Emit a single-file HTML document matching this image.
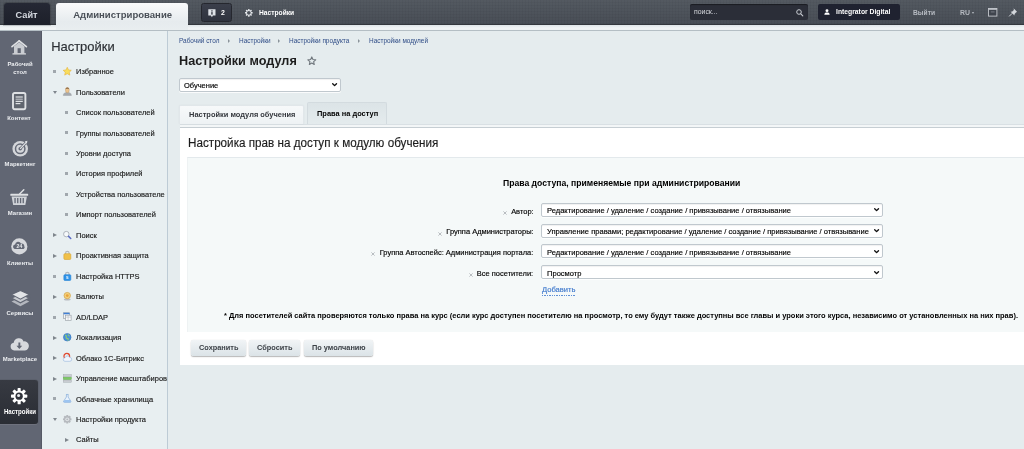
<!DOCTYPE html>
<html lang="ru">
<head>
<meta charset="utf-8">
<title>Настройки модуля</title>
<style>
*{box-sizing:border-box;margin:0;padding:0}
html,body{width:1024px;height:449px;overflow:hidden}
body{font-family:"Liberation Sans",sans-serif;background:#e5ecee;position:relative;color:#000}
#wrap{position:absolute;left:0;top:0;width:1024px;height:449px;overflow:hidden;filter:blur(.3px);will-change:transform}
.t{position:absolute;white-space:nowrap;line-height:10px}
.b{position:absolute}
#top{left:0;top:0;width:1024px;height:25px;background:#4e545c;
 background-image:linear-gradient(rgba(255,255,255,.03),rgba(0,0,0,.07)),repeating-linear-gradient(90deg,rgba(0,0,0,.035) 0 1px,transparent 1px 3px),repeating-linear-gradient(0deg,rgba(0,0,0,.035) 0 1px,transparent 1px 3px);
 border-bottom:1px solid #34373d}
#strip{left:0;top:25px;width:1024px;height:5.5px;background:linear-gradient(#dfe5e8,#f1f4f5 60%,#eef2f3);border-bottom:1px solid #b4bec4}
#tab-site{left:4px;top:3px;width:46px;height:22px;background:linear-gradient(#252834,#1d202a);border-radius:3px 3px 0 0;box-shadow:0 0 0 1px rgba(0,0,0,.15)}
#tab-admin{left:56px;top:3px;width:132px;height:27px;background:linear-gradient(#f9fafb,#e6ebee 70%,#e9eef0);border-radius:3px 3px 0 0}
#notif{left:201px;top:3px;width:30.5px;height:19px;background:linear-gradient(#3b3f4b,#2f333e);border:1px solid #25272e;border-radius:2.5px}
#search{left:690px;top:4px;width:118px;height:16px;background:#2b2e38;border-radius:2px;box-shadow:inset 0 1px 1px rgba(0,0,0,.4)}
#user{left:818px;top:4px;width:81.5px;height:16px;background:#1f2230;border-radius:2px}
#side{left:0;top:30.5px;width:42px;height:418.5px;background:#616673;box-shadow:inset -1px 0 0 rgba(0,0,0,.12)}
#side-act{left:0;top:380px;width:38px;height:43.5px;background:linear-gradient(#373a42,#2a2d34);border-radius:0 3px 3px 0;box-shadow:0 0 1px rgba(0,0,0,.6),0 1px 0 rgba(255,255,255,.13)}
#menu{left:42px;top:30.5px;width:126px;height:418.5px;background:#e8eff1;border-right:1px solid #bdcbd5}
.sq{position:absolute;width:3px;height:3px;background:#a0a7ad}
.ar{position:absolute;width:0;height:0}
.ar.r{border-left:4px solid #7f868d;border-top:2.5px solid transparent;border-bottom:2.5px solid transparent}
.ar.d{border-top:3.6px solid #7f868d;border-left:2.4px solid transparent;border-right:2.4px solid transparent}
#panel{left:179.5px;top:126.6px;width:850px;height:238.4px;background:#fff;border-top:1px solid #c6ced3}
#panel-line{left:179.5px;top:123.8px;width:850px;height:3.6px;background:#f3f6f7;border-top:.6px solid #d9e0e4}
#inner{left:186.5px;top:157px;width:850px;height:174.5px;background:#f5f9f9;border-top:1px solid #e3e9ec;border-left:1px solid #eef2f3}
#tab1{left:179.4px;top:104.8px;width:124.9px;height:19px;background:linear-gradient(#f7f9fa,#eef2f4);border:1px solid #e1e7ea;border-bottom:none;border-radius:2px 2px 0 0;box-shadow:0 0 1px rgba(0,0,0,.12)}
#tab2{left:307.2px;top:102.2px;width:79.6px;height:22.3px;background:linear-gradient(#dce4e7,#e4ebed);border:1px solid #d3dbdf;border-bottom:none;border-radius:2px 2px 0 0}
.sel{position:absolute;left:541px;width:341.6px;height:14px;background:#fff;border:1px solid #c0c8ce;border-radius:2px;box-shadow:0 1px 0 rgba(255,255,255,.8), inset 0 1px 1px rgba(0,0,0,.06)}
.btn{position:absolute;top:339.5px;height:16.2px;background:linear-gradient(#f1f4f6,#dbe3e7);border-radius:2.5px;box-shadow:0 1px 1.2px rgba(0,0,0,.28), 0 0 .8px rgba(0,0,0,.25)}
svg{position:absolute;overflow:visible}
</style>
</head>
<body>
<div id="wrap">
<div class="b" id="top"></div>
<div class="b" id="strip"></div>
<div class="b" id="tab-site"></div>
<div class="b" id="tab-admin"></div>
<div class="b" id="notif"></div>
<div class="t " style="left:15.60px;transform-origin:0 50%;top:9.91px;font-size:9.200px;transform:scaleX(1.0000);color:#d5d9e0;font-weight:bold;">Сайт</div>
<div class="t " style="left:73.20px;transform-origin:0 50%;top:9.99px;font-size:9.550px;transform:scaleX(1.0000);color:#4a5058;font-weight:bold;">Администрирование</div>
<svg style="left:207.5px;top:8.5px" width="8" height="9" viewBox="0 0 8 9"><path d="M0.3 0.3h7.2v6.2h-2.6l-1 1.8l-1-1.8h-2.6z" fill="#dfe3e8"/><rect x="3.3" y="1.3" width="1.3" height="1.2" fill="#2e313c"/><rect x="3.3" y="3.1" width="1.3" height="2.5" fill="#2e313c"/></svg>
<div class="t " style="left:221.00px;transform-origin:0 50%;top:7.89px;font-size:7.245px;transform:scaleX(0.9524);color:#ffffff;font-weight:bold;">2</div>
<svg style="left:245.2px;top:8.7px" width="7.7" height="7.7" viewBox="-10 -10 20 20"><g fill="#e9ecef"><rect x="-1.9" y="-10" width="3.8" height="20" rx="0.8" transform="rotate(0)"/><rect x="-1.9" y="-10" width="3.8" height="20" rx="0.8" transform="rotate(45)"/><rect x="-1.9" y="-10" width="3.8" height="20" rx="0.8" transform="rotate(90)"/><rect x="-1.9" y="-10" width="3.8" height="20" rx="0.8" transform="rotate(135)"/><circle r="6.9"/></g><circle r="4.9" fill="#4e545c"/></svg>
<div class="t " style="left:258.80px;transform-origin:0 50%;top:7.97px;font-size:7.003px;transform:scaleX(0.9524);color:#ffffff;font-weight:bold;">Настройки</div>
<div class="b" id="search"></div>
<div class="t " style="left:693.80px;transform-origin:0 50%;top:6.79px;font-size:7.245px;transform:scaleX(0.9524);color:#d6d9de;">поиск...</div>
<svg style="left:796px;top:9px" width="8" height="8" viewBox="0 0 8 8"><circle cx="3" cy="3" r="2.3" fill="none" stroke="#c9cdd3" stroke-width="1"/><path d="M4.8 4.8L6.800 6.800" stroke="#c9cdd3" stroke-width="1.1" stroke-linecap="round"/></svg>
<div class="b" id="user"></div>
<svg style="left:824.2px;top:8.8px" width="6" height="6" viewBox="0 0 7 7"><circle cx="3.5" cy="1.9" r="1.7" fill="#fff"/><path d="M0.4 6.6c0-2 1.2-2.6 3.1-2.6s3.1.6 3.1 2.6z" fill="#fff"/></svg>
<div class="t " style="left:835.50px;transform-origin:0 50%;top:7.13px;font-size:7.140px;transform:scaleX(0.9524);color:#ffffff;font-weight:bold;">Integrator Digital</div>
<div class="t " style="left:912.90px;transform-origin:0 50%;top:7.76px;font-size:7.035px;transform:scaleX(0.9524);color:#b7bbc2;font-weight:bold;">Выйти</div>
<div class="t " style="left:960.00px;transform-origin:0 50%;top:7.69px;font-size:7.245px;transform:scaleX(0.9524);color:#b7bbc2;font-weight:bold;">RU</div>
<div class="ar" style="left:972.3px;top:11.8px;border-top:2px solid #b9bdc4;border-left:1.7px solid transparent;border-right:1.7px solid transparent"></div>
<svg style="left:988px;top:8px" width="9.4" height="8.6" viewBox="0 0 9.4 8.6"><rect x="0.5" y="0.5" width="8.4" height="7.6" fill="#3f444d" stroke="#c4c7cd" stroke-width=".9"/><rect x="0.5" y="0.5" width="8.4" height="1.3" fill="#c4c7cd"/><rect x="2.8" y="3.6" width="3.8" height="0.7" fill="#8f949c"/></svg>
<svg style="left:1009px;top:8.3px" width="8.5" height="8.5" viewBox="0 0 8.5 8.5"><path d="M4.6 0.3l3.6 3.6l-1 .4l-1.6 1.6l-.1 1.7l-3.9-3.9l1.7-.1l1.6-1.6z" fill="#d4d7dc"/><path d="M3 5.5L0.4 8.1" stroke="#d4d7dc" stroke-width="1" stroke-linecap="round"/></svg>
<div class="b" id="side"></div>
<div class="b" id="side-act"></div>
<div class="t" style="left:-10.399999999999999px;width:60px;text-align:center;top:58.94px;font-size:6.248px;transform:scaleX(0.9524);color:#eceef1;font-weight:bold">Рабочий</div>
<div class="t" style="left:-10.399999999999999px;width:60px;text-align:center;top:66.84px;font-size:6.248px;transform:scaleX(0.9524);color:#eceef1;font-weight:bold">стол</div>
<div class="t" style="left:-10.600000000000001px;width:60px;text-align:center;top:112.84px;font-size:6.248px;transform:scaleX(0.9524);color:#eceef1;font-weight:bold">Контент</div>
<div class="t" style="left:-10.3px;width:60px;text-align:center;top:159.14px;font-size:6.248px;transform:scaleX(0.9524);color:#eceef1;font-weight:bold">Маркетинг</div>
<div class="t" style="left:-10.399999999999999px;width:60px;text-align:center;top:208.44px;font-size:6.248px;transform:scaleX(0.9524);color:#eceef1;font-weight:bold">Магазин</div>
<div class="t" style="left:-10.399999999999999px;width:60px;text-align:center;top:258.04px;font-size:6.248px;transform:scaleX(0.9524);color:#eceef1;font-weight:bold">Клиенты</div>
<div class="t" style="left:-10.3px;width:60px;text-align:center;top:308.34px;font-size:6.248px;transform:scaleX(0.9524);color:#eceef1;font-weight:bold">Сервисы</div>
<div class="t" style="left:-10.2px;width:60px;text-align:center;top:354.14px;font-size:6.248px;transform:scaleX(0.9524);color:#eceef1;font-weight:bold">Marketplace</div>
<div class="t" style="left:-10.100000000000001px;width:60px;text-align:center;top:407.08px;font-size:6.405px;transform:scaleX(0.9524);color:#ffffff;font-weight:bold">Настройки</div>
<svg style="left:11px;top:39.5px" width="16.4" height="14.8" viewBox="0 0 16.4 14.8"><path d="M8.2 0.9L1 6.6" stroke="#dfe1e4" stroke-width="1.7" stroke-linecap="round" fill="none"/><path d="M8.2 0.9L15.4 6.6" stroke="#dfe1e4" stroke-width="1.7" stroke-linecap="round" fill="none"/><path d="M3 6.3L8.2 2.3L13.4 6.3V13.4H3z" fill="#c9ccd1"/><rect x="6.6" y="8.2" width="3.2" height="5.2" fill="#616673"/><rect x="1.4" y="13.3" width="13.6" height="1.3" rx=".5" fill="#dfe1e4"/></svg>
<svg style="left:12.1px;top:91.5px" width="14.4" height="18.2" viewBox="0 0 14.4 18.2"><rect x="1" y="1" width="12.4" height="16.2" rx="1.6" fill="#60656f" stroke="#dfe1e4" stroke-width="1.9"/><rect x="3.6" y="4.4" width="7.2" height="1.2" fill="#dfe1e4"/><rect x="3.6" y="6.6" width="7.2" height="1.2" fill="#b9bcc2"/><rect x="3.6" y="8.8" width="7.2" height="1.2" fill="#dfe1e4"/><rect x="3.6" y="11" width="4.8" height="1.2" fill="#dfe1e4"/></svg>
<svg style="left:11.5px;top:138.5px" width="17" height="18" viewBox="0 0 17 18"><circle cx="8.2" cy="9.8" r="7.8" fill="#d4d6da"/><circle cx="8.2" cy="9.8" r="4.7" fill="none" stroke="#666b78" stroke-width="1.5"/><circle cx="8.2" cy="9.8" r="1.8" fill="#666b78"/><path d="M8.6 9.4L14 3.6" stroke="#616673" stroke-width="2.6"/><path d="M8.6 9.400L14 3.600" stroke="#dfe1e4" stroke-width="1.300" stroke-linecap="round"/><path d="M12.6 2.400l2.800-.6l-.5 2.900z" fill="#dfe1e4"/></svg>
<svg style="left:10px;top:188.7px" width="18.5" height="16.4" viewBox="0 0 18.5 16.4"><path d="M9.6 5L13.8 0.8" stroke="#dfe1e4" stroke-width="1.5" stroke-linecap="round"/><rect x="0.3" y="4.8" width="17.9" height="2" rx=".6" fill="#dfe1e4"/><path d="M1.6 7.6h15.3l-1.6 8.3h-12.1z" fill="#d0d3d8"/><g fill="#616673"><rect x="4.4" y="9" width="1.3" height="5.2"/><rect x="7.1" y="9" width="1.3" height="5.2"/><rect x="9.9" y="9" width="1.3" height="5.2"/><rect x="12.6" y="9" width="1.3" height="5.2"/></g></svg>
<svg style="left:11px;top:237.7px" width="16.6" height="16.8" viewBox="0 0 16.6 16.8"><circle cx="8.3" cy="8.4" r="8.1" fill="#d6d8dc"/><path d="M3.6 10.9a2.2 2.2 0 0 1 .5-4.3a3.1 3.1 0 0 1 5.9-1.1a2.9 2.9 0 0 1 3.3 2.7a1.9 1.9 0 0 1-.6 2.7z" fill="#636875"/><text x="8.4" y="10.3" font-family="Liberation Sans" font-weight="bold" font-size="5.2" fill="#e7e9ec" text-anchor="middle">24</text></svg>
<svg style="left:10.6px;top:289.6px" width="18.8" height="16.6" viewBox="0 0 18.8 16.6"><path d="M9.4 7.4L18.3 11.4L9.4 16.2L0.5 11.4z" fill="#b4b7be"/><path d="M9.4 4.2L18.3 8L9.4 12.800L0.500 8z" fill="#c8cbd0" stroke="#616673" stroke-width="1.100"/><path d="M9.400 0.400L18.300 4.400L9.400 9.200L0.500 4.400z" fill="#e2e4e7" stroke="#616673" stroke-width="1.100"/></svg>
<svg style="left:10px;top:338.4px" width="18.6" height="12.8" viewBox="0 0 18.6 12.8"><path d="M4.2 12.5a3.9 3.9 0 0 1-.5-7.7a5.2 5.2 0 0 1 9.9-1.4a4.6 4.6 0 0 1 1.4 9.1z" fill="#d7d9dd"/><path d="M8.4 4.6h1.9v3.2h1.9l-2.85 3.1l-2.85-3.1h1.9z" fill="#616673"/></svg>
<svg style="left:10.6px;top:387.5px" width="16.3" height="16.3" viewBox="-10 -10 20 20"><g fill="#ffffff"><rect x="-1.9" y="-10" width="3.8" height="20" rx="0.8" transform="rotate(0)"/><rect x="-1.9" y="-10" width="3.8" height="20" rx="0.8" transform="rotate(45)"/><rect x="-1.9" y="-10" width="3.8" height="20" rx="0.8" transform="rotate(90)"/><rect x="-1.9" y="-10" width="3.8" height="20" rx="0.8" transform="rotate(135)"/><circle r="6.9"/></g><circle r="4.5" fill="#30333b"/></svg>
<svg style="left:17.15px;top:394.05px" width="3.2" height="3.2" viewBox="0 0 4 4"><circle cx="2" cy="2" r="1.9" fill="#e9ebee"/></svg>
<div class="b" id="menu"></div>
<div class="t " style="left:51.20px;transform-origin:0 50%;top:42.31px;font-size:12.950px;transform:scaleX(1.0000);color:#2c3035;-webkit-text-stroke:.16px;">Настройки</div>
<div class="t " style="left:76.00px;transform-origin:0 50%;top:67.17px;font-size:7.875px;transform:scaleX(0.9524);color:#1a1a1a;-webkit-text-stroke:.16px;">Избранное</div>
<div class="sq" style="left:53.0px;top:70.10px"></div>
<svg style="left:62.5px;top:66.90px" width="8.7" height="8.7" viewBox="0 0 9.2 9.2"><path d="M4.5 0.3l1.3 2.8l3 .4l-2.2 2.1l.6 3l-2.7-1.5l-2.7 1.5l.6-3l-2.2-2.1l3-.4z" fill="#f9de5c" stroke="#e4b031" stroke-width=".6"/></svg>
<div class="t " style="left:76.00px;transform-origin:0 50%;top:87.63px;font-size:7.875px;transform:scaleX(0.9524);color:#1a1a1a;-webkit-text-stroke:.16px;">Пользователи</div>
<div class="ar d" style="left:52.9px;top:91.06px"></div>
<svg style="left:62.5px;top:87.36px" width="8.7" height="8.7" viewBox="0 0 9.2 9.2"><path d="M0.300 9c0-2.400 1.500-3.300 4.300-3.300s4.300.9 4.300 3.300z" fill="#a6aaaf" stroke="#8f9499" stroke-width=".4"/><rect x="2.700" y="0.600" width="3.800" height="5.400" rx="1.800" fill="#ecc48e" stroke="#b08a5c" stroke-width=".4"/><path d="M2.700 2.400a1.900 1.900 0 0 1 3.800 0c-.9-.7-2.900-.7-3.800 0z" fill="#84633f"/></svg>
<div class="t " style="left:76.00px;transform-origin:0 50%;top:108.10px;font-size:7.875px;transform:scaleX(0.9524);color:#1a1a1a;-webkit-text-stroke:.16px;">Список пользователей</div>
<div class="sq" style="left:65.0px;top:111.02px"></div>
<div class="t " style="left:76.00px;transform-origin:0 50%;top:128.56px;font-size:7.875px;transform:scaleX(0.9524);color:#1a1a1a;-webkit-text-stroke:.16px;">Группы пользователей</div>
<div class="sq" style="left:65.0px;top:131.49px"></div>
<div class="t " style="left:76.00px;transform-origin:0 50%;top:149.02px;font-size:7.875px;transform:scaleX(0.9524);color:#1a1a1a;-webkit-text-stroke:.16px;">Уровни доступа</div>
<div class="sq" style="left:65.0px;top:151.95px"></div>
<div class="t " style="left:76.00px;transform-origin:0 50%;top:169.48px;font-size:7.875px;transform:scaleX(0.9524);color:#1a1a1a;-webkit-text-stroke:.16px;">История профилей</div>
<div class="sq" style="left:65.0px;top:172.41px"></div>
<div class="t " style="left:76.00px;transform-origin:0 50%;top:189.94px;font-size:7.875px;transform:scaleX(0.9524);color:#1a1a1a;-webkit-text-stroke:.16px;">Устройства пользователе</div>
<div class="sq" style="left:65.0px;top:192.87px"></div>
<div class="t " style="left:76.00px;transform-origin:0 50%;top:210.41px;font-size:7.875px;transform:scaleX(0.9524);color:#1a1a1a;-webkit-text-stroke:.16px;">Импорт пользователей</div>
<div class="sq" style="left:65.0px;top:213.33px"></div>
<div class="t " style="left:76.00px;transform-origin:0 50%;top:230.87px;font-size:7.875px;transform:scaleX(0.9524);color:#1a1a1a;-webkit-text-stroke:.16px;">Поиск</div>
<div class="ar r" style="left:53.0px;top:233.40px"></div>
<svg style="left:62.5px;top:230.60px" width="8.7" height="8.7" viewBox="0 0 9.2 9.2"><circle cx="3.5" cy="3.3" r="2.9" fill="#f6f9fb" stroke="#a3aab2" stroke-width=".9"/><path d="M5.9 5.700L8.200 8" stroke="#5b6cc4" stroke-width="1.600" stroke-linecap="round"/></svg>
<div class="t " style="left:76.00px;transform-origin:0 50%;top:251.33px;font-size:7.875px;transform:scaleX(0.9524);color:#1a1a1a;-webkit-text-stroke:.16px;">Проактивная защита</div>
<div class="ar r" style="left:53.0px;top:253.86px"></div>
<svg style="left:62.5px;top:251.06px" width="8.7" height="8.7" viewBox="0 0 9.2 9.2"><path d="M2.700 3.600V2.300a1.900 1.900 0 0 1 3.800 0V3.600" fill="none" stroke="#b4b8bd" stroke-width="1.200"/><rect x="0.900" y="2.800" width="7.400" height="6.200" rx="1.100" fill="#f0c04a" stroke="#d6a12a" stroke-width=".6"/></svg>
<div class="t " style="left:76.00px;transform-origin:0 50%;top:271.79px;font-size:7.875px;transform:scaleX(0.9524);color:#1a1a1a;-webkit-text-stroke:.16px;">Настройка HTTPS</div>
<div class="sq" style="left:53.0px;top:274.72px"></div>
<svg style="left:62.5px;top:271.52px" width="8.7" height="8.7" viewBox="0 0 9.2 9.2"><path d="M2.700 3.600V2.300a1.900 1.900 0 0 1 3.800 0V3.600" fill="none" stroke="#b4b8bd" stroke-width="1.200"/><rect x="0.900" y="2.800" width="7.400" height="6.200" rx="1.100" fill="#2f93e8" stroke="#1f7fd3" stroke-width=".6"/><text x="4.600" y="7.700" font-size="5" font-weight="bold" fill="#ffffff" text-anchor="middle" font-family="Liberation Sans">s</text></svg>
<div class="t " style="left:76.00px;transform-origin:0 50%;top:292.25px;font-size:7.875px;transform:scaleX(0.9524);color:#1a1a1a;-webkit-text-stroke:.16px;">Валюты</div>
<div class="ar r" style="left:53.0px;top:294.78px"></div>
<svg style="left:62.5px;top:291.98px" width="8.7" height="8.7" viewBox="0 0 9.2 9.2"><ellipse cx="4.5" cy="8" rx="3.6" ry="1.1" fill="#b8bcc2"/><circle cx="4.5" cy="3.8" r="3.4" fill="#f3cf7c" stroke="#cf9f42" stroke-width=".7"/><circle cx="4.5" cy="3.8" r="1.5" fill="#e8a33b"/></svg>
<div class="t " style="left:76.00px;transform-origin:0 50%;top:312.72px;font-size:7.875px;transform:scaleX(0.9524);color:#1a1a1a;-webkit-text-stroke:.16px;">AD/LDAP</div>
<div class="sq" style="left:53.0px;top:315.64px"></div>
<svg style="left:62.5px;top:312.44px" width="8.7" height="8.7" viewBox="0 0 9.2 9.2"><rect x="0.6" y="0.8" width="6.4" height="6" fill="#f2f4f6" stroke="#9aa1a8" stroke-width=".7"/><rect x="0.6" y="0.8" width="6.4" height="1.6" fill="#3f7fd6"/><rect x="2.6" y="3.4" width="6" height="5.4" fill="#fbfbfc" stroke="#9aa1a8" stroke-width=".7"/><path d="M2.6 5.4h6M5.4 3.4v5.4" stroke="#b3b9bf" stroke-width=".6"/></svg>
<div class="t " style="left:76.00px;transform-origin:0 50%;top:333.18px;font-size:7.875px;transform:scaleX(0.9524);color:#1a1a1a;-webkit-text-stroke:.16px;">Локализация</div>
<div class="ar r" style="left:53.0px;top:335.71px"></div>
<svg style="left:62.5px;top:332.91px" width="8.7" height="8.7" viewBox="0 0 9.2 9.2"><circle cx="4.5" cy="4.5" r="4" fill="#4a90d9" stroke="#2f6fb8" stroke-width=".6"/><path d="M2.2 2.2c1 .2 1.6 1 1.2 2s.4 1.600 1.400 1.600s.8 1.400.2 2.200M6 1.600c-.4.800.2 1.400 1 1.400" stroke="#8fd16a" stroke-width="1.200" fill="none"/></svg>
<div class="t " style="left:76.00px;transform-origin:0 50%;top:353.64px;font-size:7.875px;transform:scaleX(0.9524);color:#1a1a1a;-webkit-text-stroke:.16px;">Облако 1С-Битрикс</div>
<div class="ar r" style="left:53.0px;top:356.17px"></div>
<svg style="left:62.5px;top:353.37px" width="8.7" height="8.7" viewBox="0 0 9.2 9.2"><circle cx="4" cy="3.4" r="3" fill="none" stroke="#e0492f" stroke-width="1.3"/><path d="M2.200 8.800a1.900 1.900 0 0 1 0-3.800a2.600 2.600 0 0 1 4.800-.4a2.100 2.100 0 0 1 .2 4.200z" fill="#f1f5fb" stroke="#8fb1dd" stroke-width=".6"/></svg>
<div class="t " style="left:76.00px;transform-origin:0 50%;top:374.10px;font-size:7.875px;transform:scaleX(0.9524);color:#1a1a1a;-webkit-text-stroke:.16px;">Управление масштабиров</div>
<div class="ar r" style="left:53.0px;top:376.63px"></div>
<svg style="left:62.5px;top:373.83px" width="8.7" height="8.7" viewBox="0 0 9.2 9.2"><rect x="0.3" y="0.6" width="8.6" height="2.400" fill="#c9cdd2" stroke="#9aa0a6" stroke-width=".4"/><rect x="0.3" y="3.4" width="8.6" height="2.600" fill="#7dc966" stroke="#5aa746" stroke-width=".4"/><rect x="0.3" y="6.400" width="8.6" height="2.400" fill="#c9cdd2" stroke="#9aa0a6" stroke-width=".4"/></svg>
<div class="t " style="left:76.00px;transform-origin:0 50%;top:394.56px;font-size:7.875px;transform:scaleX(0.9524);color:#1a1a1a;-webkit-text-stroke:.16px;">Облачные хранилища</div>
<div class="sq" style="left:53.0px;top:397.49px"></div>
<svg style="left:62.5px;top:394.29px" width="8.7" height="8.7" viewBox="0 0 9.2 9.2"><path d="M3.2 0.5h2.600M3.600 0.600v2.600l-2.800 4.200a1 1 0 0 0 .8 1.500h5.800a1 1 0 0 0 .8-1.500l-2.800-4.200v-2.600" fill="#e8f2fc" stroke="#7fa8d8" stroke-width=".7"/><path d="M1.600 6.400h5.800l.9 1.500a.6.6 0 0 1-.5.900h-6.600a.6.6 0 0 1-.5-.9z" fill="#9cc4f0"/></svg>
<div class="t " style="left:76.00px;transform-origin:0 50%;top:415.03px;font-size:7.875px;transform:scaleX(0.9524);color:#1a1a1a;-webkit-text-stroke:.16px;">Настройки продукта</div>
<div class="ar d" style="left:52.9px;top:418.45px"></div>
<svg style="left:62.5px;top:414.75px" width="8.7" height="8.7" viewBox="0 0 9.2 9.2"><g transform="translate(4.5 4.600) scale(.45)" fill="#b5b9be"><rect x="-2.4" y="-10" width="4.8" height="20" rx=".8" transform="rotate(0)"/><rect x="-2.4" y="-10" width="4.8" height="20" rx=".8" transform="rotate(45)"/><rect x="-2.4" y="-10" width="4.8" height="20" rx=".8" transform="rotate(90)"/><rect x="-2.4" y="-10" width="4.8" height="20" rx=".8" transform="rotate(135)"/><circle r="7.600"/><circle r="4.600" fill="#dfe3e6"/><circle r="2.200" fill="#b5b9be"/></g></svg>
<div class="t " style="left:76.00px;transform-origin:0 50%;top:435.49px;font-size:7.875px;transform:scaleX(0.9524);color:#1a1a1a;-webkit-text-stroke:.16px;">Сайты</div>
<div class="ar r" style="left:65.4px;top:438.02px"></div>
<div class="b" style="left:167px;top:30.5px;width:1px;height:418.5px;background:#bdcbd5"></div>
<div class="b" style="left:168px;top:30.5px;width:11px;height:418.5px;background:#e5ecee"></div>
<div class="t " style="left:179.25px;transform-origin:0 50%;top:35.95px;font-size:6.773px;transform:scaleX(0.9524);color:#2f4c86;">Рабочий стол</div>
<div class="t " style="left:238.75px;transform-origin:0 50%;top:35.95px;font-size:6.773px;transform:scaleX(0.9524);color:#2f4c86;">Настройки</div>
<div class="t " style="left:289.25px;transform-origin:0 50%;top:35.95px;font-size:6.773px;transform:scaleX(0.9524);color:#2f4c86;">Настройки продукта</div>
<div class="t " style="left:369.25px;transform-origin:0 50%;top:35.95px;font-size:6.773px;transform:scaleX(0.9524);color:#2f4c86;">Настройки модулей</div>
<div class="ar" style="left:228.3px;top:38.7px;border-left:2.7px solid #8b939a;border-top:2px solid transparent;border-bottom:2px solid transparent"></div>
<div class="ar" style="left:278.3px;top:38.7px;border-left:2.7px solid #8b939a;border-top:2px solid transparent;border-bottom:2px solid transparent"></div>
<div class="ar" style="left:358.3px;top:38.7px;border-left:2.7px solid #8b939a;border-top:2px solid transparent;border-bottom:2px solid transparent"></div>
<div class="t " style="left:178.90px;transform-origin:0 50%;top:56.41px;font-size:12.954px;transform:scaleX(0.9804);color:#1d1d1d;font-weight:bold;">Настройки модуля</div>
<svg style="left:307.3px;top:56.4px" width="9.6" height="9.4" viewBox="0 0 9.6 9.4"><path d="M4.8 0.9l1.15 2.6l2.8.3l-2.1 1.900l.6 2.800l-2.450-1.450l-2.450 1.450l.6-2.800l-2.100-1.900l2.800-.3z" fill="none" stroke="#70777d" stroke-width="1.1" stroke-linejoin="round"/></svg>
<div class="sel" style="left:179.3px;top:77.5px;width:161.3px;height:14.3px"></div>
<div class="t " style="left:184.30px;transform-origin:0 50%;top:80.72px;font-size:7.875px;transform:scaleX(0.9524);color:#000;-webkit-text-stroke:.16px;">Обучение</div>
<svg style="left:332.1px;top:83.2px" width="5.2" height="3.5" viewBox="0 0 6 4"><path d="M0.8 0.800L3 3L5.200 0.800" fill="none" stroke="#111" stroke-width="1.600" stroke-linecap="round" stroke-linejoin="round"/></svg>
<div class="b" id="panel-line"></div>
<div class="b" id="panel"></div>
<div class="b" id="tab1"></div>
<div class="b" id="tab2"></div>
<div class="t " style="left:188.50px;transform-origin:0 50%;top:109.59px;font-size:7.833px;transform:scaleX(0.9524);color:#33373c;font-weight:bold;">Настройки модуля обучения</div>
<div class="t " style="left:316.80px;transform-origin:0 50%;top:109.09px;font-size:7.823px;transform:scaleX(0.9524);color:#000;font-weight:bold;">Права на доступ</div>
<div class="t " style="left:188.40px;transform-origin:0 50%;top:137.96px;font-size:12.519px;transform:scaleX(0.9346);color:#1c1c1c;-webkit-text-stroke:.16px;">Настройка прав на доступ к модулю обучения</div>
<div class="b" id="inner"></div>
<div class="t " style="left:503.00px;transform-origin:0 50%;top:178.16px;font-size:9.051px;transform:scaleX(0.9524);color:#000;font-weight:bold;">Права доступа, применяемые при администрировании</div>
<div class="t " style="right:490.70px;transform-origin:100% 50%;top:206.52px;font-size:7.875px;transform:scaleX(0.9524);color:#000;-webkit-text-stroke:.16px;">Автор:</div>
<svg style="left:503px;top:210.75px" width="4" height="4" viewBox="0 0 4 4"><path d="M0.4 0.400L3.600 3.600M3.600 0.400L0.400 3.600" stroke="#a9afb4" stroke-width=".8"/></svg>
<div class="sel" style="top:203.00px"></div>
<div class="t " style="left:547.00px;transform-origin:0 50%;top:206.05px;font-size:7.949px;transform:scaleX(0.9524);color:#000;-webkit-text-stroke:.16px;">Редактирование / удаление / создание / привязывание / отвязывание</div>
<svg style="left:874.0px;top:208.3px" width="5.2" height="3.5" viewBox="0 0 6 4"><path d="M0.8 0.800L3 3L5.200 0.800" fill="none" stroke="#111" stroke-width="1.600" stroke-linecap="round" stroke-linejoin="round"/></svg>
<div class="t " style="right:490.70px;transform-origin:100% 50%;top:227.35px;font-size:7.875px;transform:scaleX(0.9524);color:#000;-webkit-text-stroke:.16px;">Группа Администраторы:</div>
<svg style="left:438px;top:231.58px" width="4" height="4" viewBox="0 0 4 4"><path d="M0.4 0.400L3.600 3.600M3.600 0.400L0.400 3.600" stroke="#a9afb4" stroke-width=".8"/></svg>
<div class="sel" style="top:223.63px"></div>
<div class="t " style="left:547.00px;transform-origin:0 50%;top:226.88px;font-size:7.949px;transform:scaleX(0.9524);color:#000;-webkit-text-stroke:.16px;">Управление правами; редактирование / удаление / создание / привязывание / отвязывание</div>
<svg style="left:874.0px;top:228.93px" width="5.2" height="3.5" viewBox="0 0 6 4"><path d="M0.8 0.800L3 3L5.200 0.800" fill="none" stroke="#111" stroke-width="1.600" stroke-linecap="round" stroke-linejoin="round"/></svg>
<div class="t " style="right:490.70px;transform-origin:100% 50%;top:248.18px;font-size:7.875px;transform:scaleX(0.9524);color:#000;-webkit-text-stroke:.16px;">Группа Автоспейс: Администрация портала:</div>
<svg style="left:371.3px;top:252.41px" width="4" height="4" viewBox="0 0 4 4"><path d="M0.4 0.400L3.600 3.600M3.600 0.400L0.400 3.600" stroke="#a9afb4" stroke-width=".8"/></svg>
<div class="sel" style="top:244.46px"></div>
<div class="t " style="left:547.00px;transform-origin:0 50%;top:247.71px;font-size:7.949px;transform:scaleX(0.9524);color:#000;-webkit-text-stroke:.16px;">Редактирование / удаление / создание / привязывание / отвязывание</div>
<svg style="left:874.0px;top:249.76000000000002px" width="5.2" height="3.5" viewBox="0 0 6 4"><path d="M0.8 0.800L3 3L5.200 0.800" fill="none" stroke="#111" stroke-width="1.600" stroke-linecap="round" stroke-linejoin="round"/></svg>
<div class="t " style="right:490.70px;transform-origin:100% 50%;top:269.01px;font-size:7.875px;transform:scaleX(0.9524);color:#000;-webkit-text-stroke:.16px;">Все посетители:</div>
<svg style="left:469.3px;top:273.24px" width="4" height="4" viewBox="0 0 4 4"><path d="M0.4 0.400L3.600 3.600M3.600 0.400L0.400 3.600" stroke="#a9afb4" stroke-width=".8"/></svg>
<div class="sel" style="top:265.29px"></div>
<div class="t " style="left:547.00px;transform-origin:0 50%;top:268.54px;font-size:7.949px;transform:scaleX(0.9524);color:#000;-webkit-text-stroke:.16px;">Просмотр</div>
<svg style="left:874.0px;top:270.59000000000003px" width="5.2" height="3.5" viewBox="0 0 6 4"><path d="M0.8 0.800L3 3L5.200 0.800" fill="none" stroke="#111" stroke-width="1.600" stroke-linecap="round" stroke-linejoin="round"/></svg>
<div class="t " style="left:541.50px;transform-origin:0 50%;top:285.34px;font-size:7.959px;transform:scaleX(0.9524);color:#3f79cc;-webkit-text-stroke:.16px;">Добавить</div>
<div class="b" style="left:541.5px;top:294.6px;width:33.6px;height:1px;background:repeating-linear-gradient(90deg,#5f90d6 0 1.5px,transparent 1.5px 2.4px)"></div>
<div class="t " style="left:224.20px;transform-origin:0 50%;top:310.87px;font-size:7.865px;transform:scaleX(0.9524);color:#000;font-weight:bold;">* Для посетителей сайта проверяются только права на курс (если курс доступен посетителю на просмотр, то ему будут также доступны все главы и уроки этого курса, независимо от установленных на них прав).</div>
<div class="btn" style="left:191px;width:54.5px"></div>
<div class="t " style="left:198.50px;transform-origin:0 50%;top:342.61px;font-size:7.749px;transform:scaleX(0.9524);color:#3c4147;font-weight:bold;">Сохранить</div>
<div class="btn" style="left:249.3px;width:50.7px"></div>
<div class="t " style="left:257.40px;transform-origin:0 50%;top:342.61px;font-size:7.749px;transform:scaleX(0.9524);color:#3c4147;font-weight:bold;">Сбросить</div>
<div class="btn" style="left:303.8px;width:69.7px"></div>
<div class="t " style="left:312.00px;transform-origin:0 50%;top:342.61px;font-size:7.749px;transform:scaleX(0.9524);color:#3c4147;font-weight:bold;">По умолчанию</div>
</div>
</body>
</html>
